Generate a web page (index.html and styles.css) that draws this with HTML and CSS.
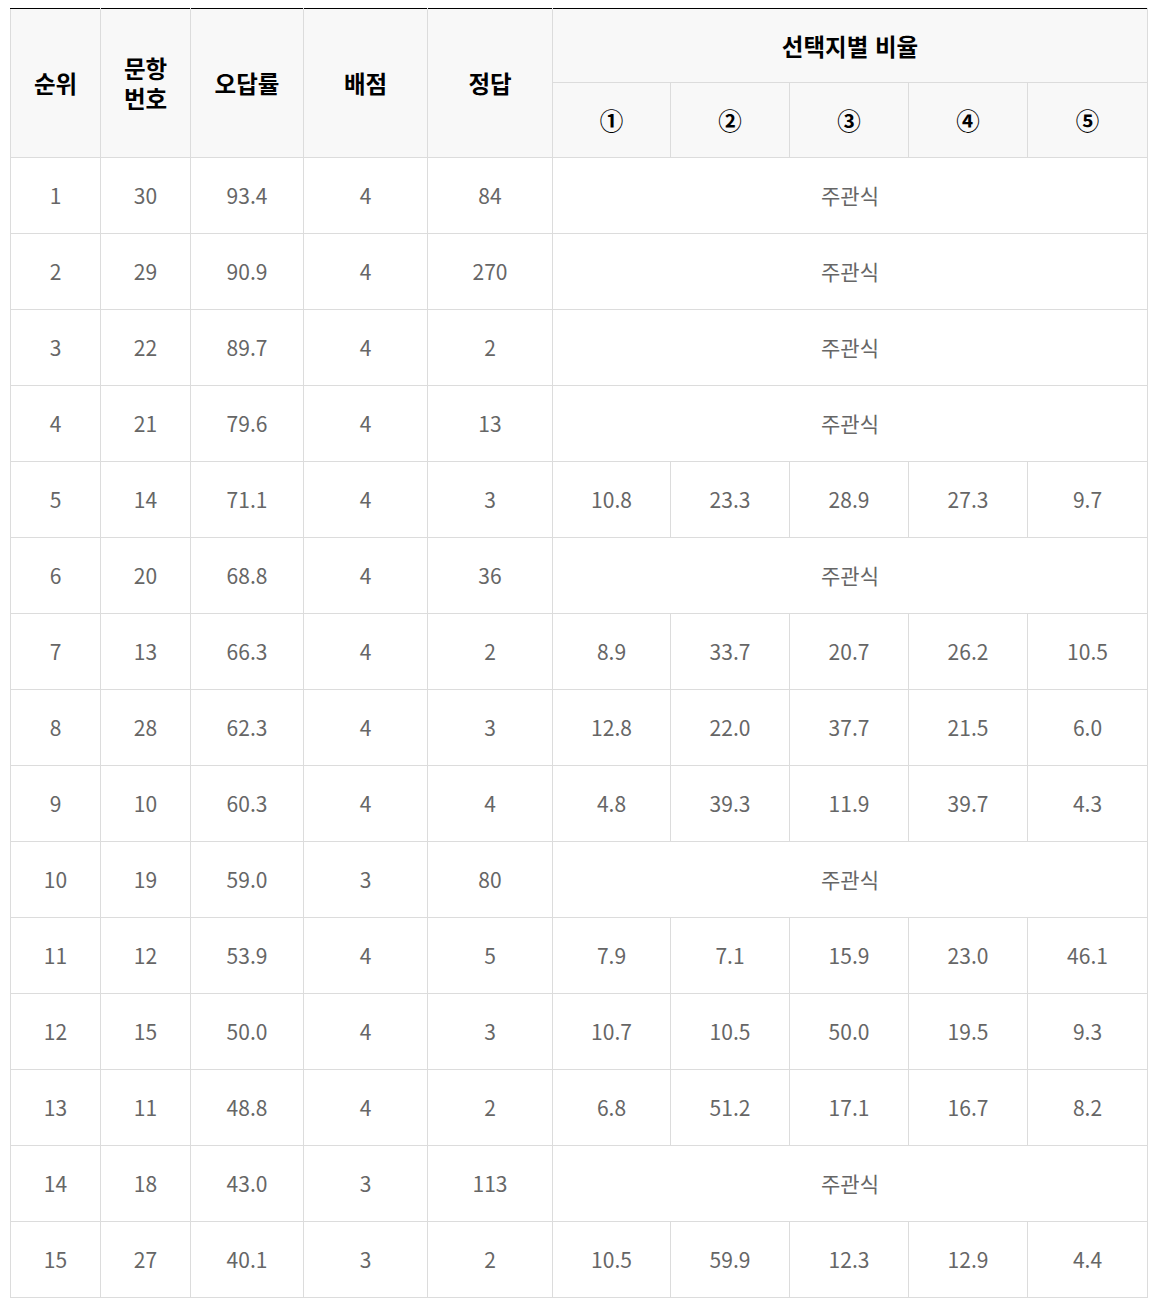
FILE: index.html
```html
<!DOCTYPE html>
<html lang="ko">
<head>
<meta charset="utf-8">
<link rel="stylesheet" href="styles.css">
</head>
<body>
<table class="stats">
  <colgroup>
    <col class="c-rank"><col class="c-no"><col class="c-rate"><col class="c-score"><col class="c-ans">
    <col class="c-opt1"><col class="c-opt2"><col class="c-opt3"><col class="c-opt4"><col class="c-opt5">
  </colgroup>
  <thead>
    <tr class="head-top">
      <th rowspan="2">순위</th>
      <th rowspan="2"><span class="line">문항</span><span class="line">번호</span></th>
      <th rowspan="2">오답률</th>
      <th rowspan="2">배점</th>
      <th rowspan="2">정답</th>
      <th colspan="5">선택지별 비율</th>
    </tr>
    <tr class="head-sub">
      <th>①</th><th>②</th><th>③</th><th>④</th><th>⑤</th>
    </tr>
  </thead>
  <tbody>
    <tr><td>1</td><td>30</td><td>93.4</td><td>4</td><td>84</td><td colspan="5">주관식</td></tr>
    <tr><td>2</td><td>29</td><td>90.9</td><td>4</td><td>270</td><td colspan="5">주관식</td></tr>
    <tr><td>3</td><td>22</td><td>89.7</td><td>4</td><td>2</td><td colspan="5">주관식</td></tr>
    <tr><td>4</td><td>21</td><td>79.6</td><td>4</td><td>13</td><td colspan="5">주관식</td></tr>
    <tr><td>5</td><td>14</td><td>71.1</td><td>4</td><td>3</td><td>10.8</td><td>23.3</td><td>28.9</td><td>27.3</td><td>9.7</td></tr>
    <tr><td>6</td><td>20</td><td>68.8</td><td>4</td><td>36</td><td colspan="5">주관식</td></tr>
    <tr><td>7</td><td>13</td><td>66.3</td><td>4</td><td>2</td><td>8.9</td><td>33.7</td><td>20.7</td><td>26.2</td><td>10.5</td></tr>
    <tr><td>8</td><td>28</td><td>62.3</td><td>4</td><td>3</td><td>12.8</td><td>22.0</td><td>37.7</td><td>21.5</td><td>6.0</td></tr>
    <tr><td>9</td><td>10</td><td>60.3</td><td>4</td><td>4</td><td>4.8</td><td>39.3</td><td>11.9</td><td>39.7</td><td>4.3</td></tr>
    <tr><td>10</td><td>19</td><td>59.0</td><td>3</td><td>80</td><td colspan="5">주관식</td></tr>
    <tr><td>11</td><td>12</td><td>53.9</td><td>4</td><td>5</td><td>7.9</td><td>7.1</td><td>15.9</td><td>23.0</td><td>46.1</td></tr>
    <tr><td>12</td><td>15</td><td>50.0</td><td>4</td><td>3</td><td>10.7</td><td>10.5</td><td>50.0</td><td>19.5</td><td>9.3</td></tr>
    <tr><td>13</td><td>11</td><td>48.8</td><td>4</td><td>2</td><td>6.8</td><td>51.2</td><td>17.1</td><td>16.7</td><td>8.2</td></tr>
    <tr><td>14</td><td>18</td><td>43.0</td><td>3</td><td>113</td><td colspan="5">주관식</td></tr>
    <tr><td>15</td><td>27</td><td>40.1</td><td>3</td><td>2</td><td>10.5</td><td>59.9</td><td>12.3</td><td>12.9</td><td>4.4</td></tr>
  </tbody>
</table>
</body>
</html>
```

FILE: styles.css
```css
html, body {
  background: #fff;
}
body {
  margin: 8px 0 0 10px;
  font-family: "Noto Sans CJK KR", "Noto Sans", sans-serif;
}
.stats {
  border-collapse: collapse;
  table-layout: fixed;
  width: 1138px;
}
.c-rank { width: 90px; }
.c-no { width: 90px; }
.c-rate { width: 113px; }
.c-score { width: 124px; }
.c-ans { width: 125px; }
.c-opt1 { width: 118px; }
.c-opt2 { width: 119px; }
.c-opt3 { width: 119px; }
.c-opt4 { width: 119px; }
.c-opt5 { width: 120px; }

.stats th,
.stats td {
  border: 1px solid #dcdcdc;
  padding: 0;
  text-align: center;
  vertical-align: middle;
}
.stats th {
  background: #f8f8f8;
  color: #000;
  font-weight: 700;
  font-size: 23.5px;
  line-height: 30px;
}
.line {
  display: block;
}
.head-top th {
  border-top: 1px solid #000;
  height: 73px;
}
.head-sub th {
  height: 74px;
}
.stats td {
  color: #666;
  font-size: 21px;
  line-height: 28px;
  height: 73px;
  padding-bottom: 2px;
}
```
